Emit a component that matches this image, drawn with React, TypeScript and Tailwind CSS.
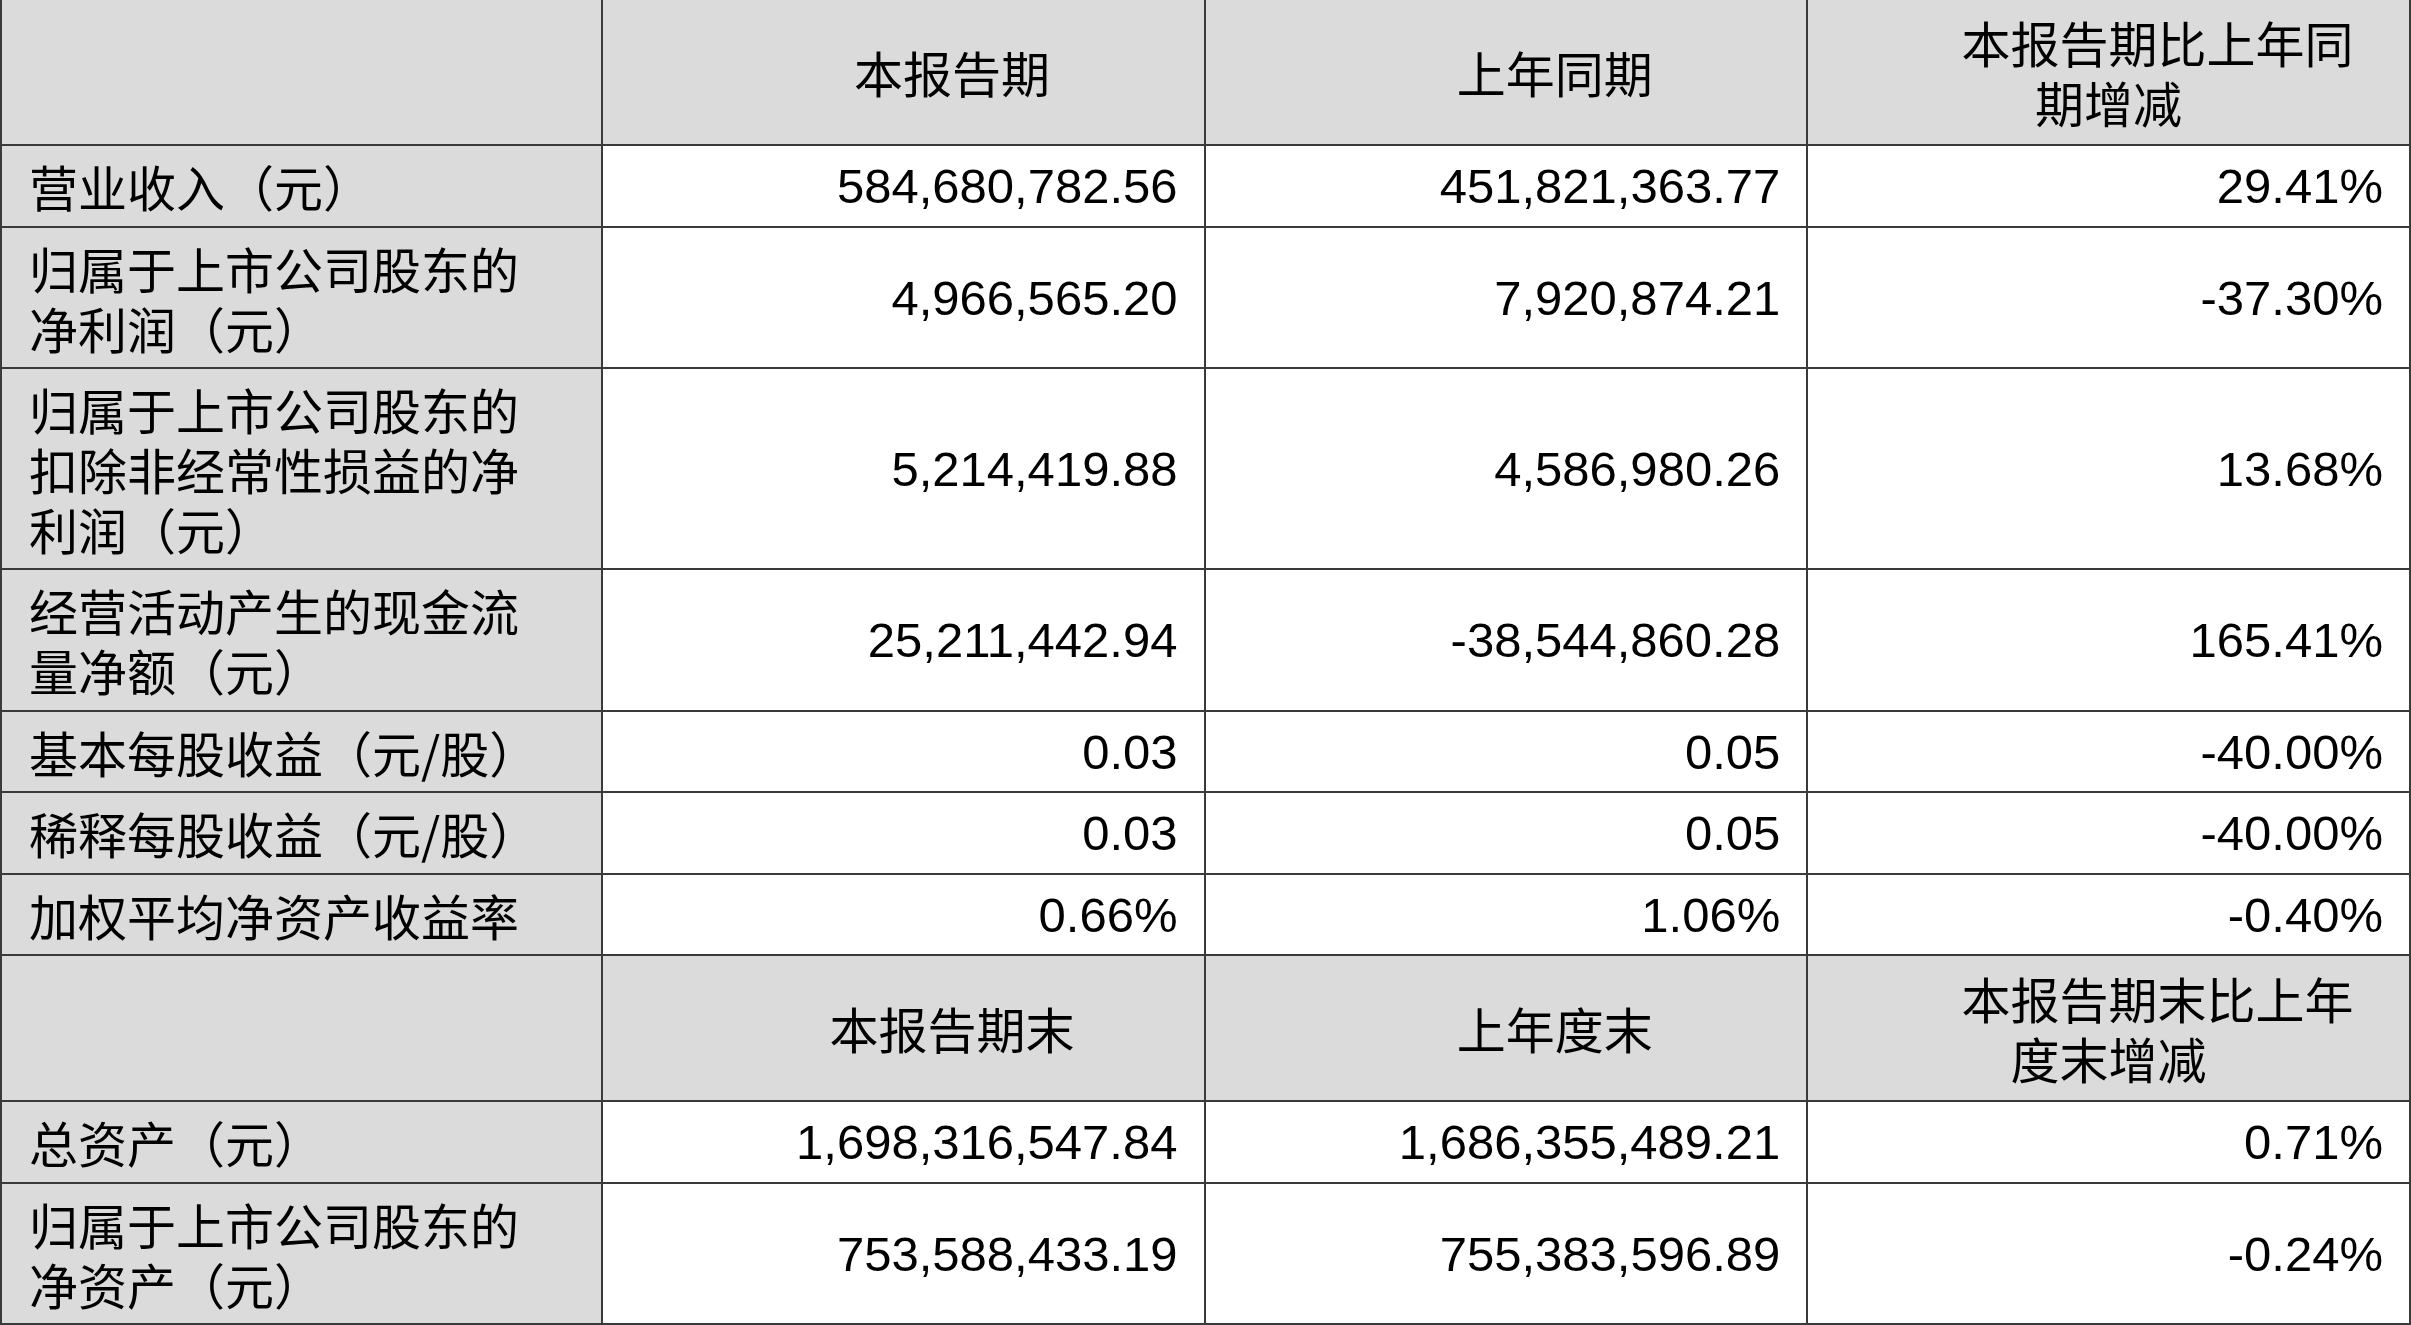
import React from 'react';

type Row = {
  label: string[];
  values: string[];
  h: string;
};

type HeadRow = {
  cols: string[];
  last: string[];
  h: string;
};

const cjk = { fontFamily: '"Noto Sans CJK SC", "Noto Sans", sans-serif' };
const num = { fontFamily: '"Liberation Sans", Arial, sans-serif' };

const head1: HeadRow = {
  cols: ['本报告期', '上年同期'],
  last: ['本报告期比上年同', '期增减'],
  h: 'h-[146px]'
};

const head2: HeadRow = {
  cols: ['本报告期末', '上年度末'],
  last: ['本报告期末比上年', '度末增减'],
  h: 'h-[146px]'
};

const rowsA: Row[] = [
  { label: ['营业收入（元）'], values: ['584,680,782.56', '451,821,363.77', '29.41%'], h: 'h-[82px]' },
  { label: ['归属于上市公司股东的', '净利润（元）'], values: ['4,966,565.20', '7,920,874.21', '-37.30%'], h: 'h-[141px]' },
  {
    label: ['归属于上市公司股东的', '扣除非经常性损益的净', '利润（元）'],
    values: ['5,214,419.88', '4,586,980.26', '13.68%'],
    h: 'h-[201px]'
  },
  { label: ['经营活动产生的现金流', '量净额（元）'], values: ['25,211,442.94', '-38,544,860.28', '165.41%'], h: 'h-[142px]' },
  { label: ['基本每股收益（元/股）'], values: ['0.03', '0.05', '-40.00%'], h: 'h-[81px]' },
  { label: ['稀释每股收益（元/股）'], values: ['0.03', '0.05', '-40.00%'], h: 'h-[82px]' },
  { label: ['加权平均净资产收益率'], values: ['0.66%', '1.06%', '-0.40%'], h: 'h-[81px]' }
];

const rowsB: Row[] = [
  { label: ['总资产（元）'], values: ['1,698,316,547.84', '1,686,355,489.21', '0.71%'], h: 'h-[82px]' },
  { label: ['归属于上市公司股东的', '净资产（元）'], values: ['753,588,433.19', '755,383,596.89', '-0.24%'], h: 'h-[141px]' }
];

const cell = 'border-r-2 border-b-2 border-[#3a3a3a] flex';

function HeaderRow({ row }: { row: HeadRow }) {
  return (
    <div className={`grid grid-cols-4 bg-[#dbdbdb] ${row.h}`}>
      <div className={`${cell} border-l-2`} />
      {/* header titles sit about one glyph right of centre */}
      {row.cols.map((c) => (
        <div key={c} className={`${cell} items-center justify-center pl-[98px]`} style={cjk}>
          {c}
        </div>
      ))}
      <div className={`${cell} flex-col items-center justify-center`} style={cjk}>
        <span className="pl-[98px]">{row.last[0]}</span>
        <span>{row.last[1]}</span>
      </div>
    </div>
  );
}

function DataRow({ row }: { row: Row }) {
  return (
    <div className={`grid grid-cols-4 ${row.h}`}>
      <div className={`${cell} border-l-2 bg-[#dbdbdb] flex-col justify-center pl-[27px]`} style={cjk}>
        {row.label.map((l) => (
          <span key={l}>{l}</span>
        ))}
      </div>
      {row.values.map((v, i) => (
        <div key={i} className={`${cell} bg-white items-center justify-end pr-[26px]`} style={num}>
          {v}
        </div>
      ))}
    </div>
  );
}

export default function App() {
  return (
    <div className="w-[2411px] h-[1325px] bg-white text-black text-[49px] leading-[60px] flex flex-col overflow-hidden">
      <HeaderRow row={head1} />
      {rowsA.map((r) => (
        <DataRow key={r.label.join('')} row={r} />
      ))}
      <HeaderRow row={head2} />
      {rowsB.map((r) => (
        <DataRow key={r.label.join('')} row={r} />
      ))}
    </div>
  );
}
